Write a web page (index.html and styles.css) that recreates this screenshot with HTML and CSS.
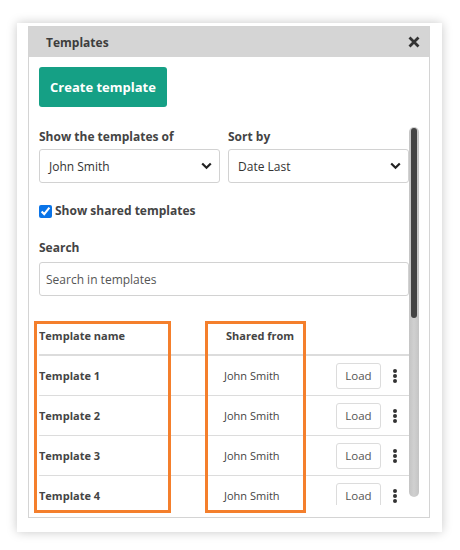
FILE: index.html
```html
<!DOCTYPE html>
<html>
<head>
<meta charset="utf-8">
<link rel="stylesheet" href="styles.css">
</head>
<body>
<div class="stage">
  <div class="card">
    <div class="panel">
      <div class="head">
        <span class="title">Templates</span>
        <svg class="close" width="12" height="12" viewBox="0 0 12 12"><path d="M1.5 1.5 L10.5 10.5 M10.5 1.5 L1.5 10.5" stroke="#333" stroke-width="2.8" stroke-linecap="butt"/></svg>
      </div>
      <div class="body">
        <button class="create">Create template</button>
        <div class="scrollwrap">
          <div class="scroll">
            <div class="filters">
              <div class="field">
                <div class="label">Show the templates of</div>
                <div class="select"><span>John Smith</span><svg width="11" height="8" viewBox="0 0 11 8"><path d="M1.2 1.5 L5.5 5.8 L9.8 1.5" fill="none" stroke="#222" stroke-width="2.2"/></svg></div>
              </div>
              <div class="field">
                <div class="label">Sort by</div>
                <div class="select"><span>Date Last</span><svg width="11" height="8" viewBox="0 0 11 8"><path d="M1.2 1.5 L5.5 5.8 L9.8 1.5" fill="none" stroke="#222" stroke-width="2.2"/></svg></div>
              </div>
            </div>
            <label class="check"><input type="checkbox" checked><span>Show shared templates</span></label>
            <div class="label search-label">Search</div>
            <div class="input">Search in templates</div>
            <div class="table">
              <div class="thead">
                <div class="c-name">Template name</div>
                <div class="c-shared th-shared">Shared from</div>
              </div>
              <div class="row">
                <div class="c-name name">Template 1</div>
                <div class="c-shared">John Smith</div>
                <div class="c-load"><span class="load">Load</span></div>
                <div class="c-menu"><span class="kebab"><i></i><i></i><i></i></span></div>
              </div>
              <div class="row">
                <div class="c-name name">Template 2</div>
                <div class="c-shared">John Smith</div>
                <div class="c-load"><span class="load">Load</span></div>
                <div class="c-menu"><span class="kebab"><i></i><i></i><i></i></span></div>
              </div>
              <div class="row">
                <div class="c-name name">Template 3</div>
                <div class="c-shared">John Smith</div>
                <div class="c-load"><span class="load">Load</span></div>
                <div class="c-menu"><span class="kebab"><i></i><i></i><i></i></span></div>
              </div>
              <div class="row">
                <div class="c-name name">Template 4</div>
                <div class="c-shared">John Smith</div>
                <div class="c-load"><span class="load">Load</span></div>
                <div class="c-menu"><span class="kebab"><i></i><i></i><i></i></span></div>
              </div>
            </div>
          </div>
          <div class="scrollbar"><div class="thumb"></div></div>
        </div>
      </div>
    </div>
  </div>
  <div class="mark m1"></div>
  <div class="mark m2"></div>
</div>
</body>
</html>
```
FILE: styles.css
```css
* { box-sizing: border-box; }
html, body { margin: 0; background: #fff; }
body { font-family: "Open Sans", "Liberation Sans", sans-serif; color: #444; }

.stage { position: relative; width: 460px; height: 550px; padding: 23px 0 0 17px; }

.card {
  width: 425px; height: 509px;
  padding: 3px 12px 14px 11px;
  background: #fff;
  box-shadow: 0 0 10px rgba(0,0,0,0.22);
}

.panel {
  width: 402px; height: 492px;
  border: 1px solid #d4d4d4;
  display: flex; flex-direction: column;
}

.head {
  height: 30px; flex: none;
  background: #d5d5d5;
  display: flex; align-items: center; justify-content: space-between;
  padding: 0 9px 0 17px;
}
.title { font-weight: 700; font-size: 12px; color: #3d3d3d; }
.close { display: block; }

.body { flex: 1; padding: 10px 10px 12px 10px; display: flex; flex-direction: column; }

.create {
  align-self: flex-start;
  width: 128px; height: 40px;
  border: none; border-radius: 3px;
  background: #15a085; color: #fff;
  font-family: inherit; font-weight: 700; font-size: 13px;
  padding: 0;
}

.scrollwrap { margin-top: 10px; height: 388px; display: flex; }
.scroll { flex: 1; overflow: hidden; padding-top: 11px; }

.scrollbar {
  width: 10px; margin: 10px 0 8px 0;
  background: linear-gradient(to right, #c4c4c4, #d0d0d0 50%, #c4c4c4);
  border-radius: 5px;
  padding: 1px 2px 0 2px;
}
.thumb { height: 190px; background: #444; border-radius: 3px; }

.filters { display: grid; grid-template-columns: 181px 181px; column-gap: 8px; }
.label { font-weight: 700; font-size: 12px; line-height: 18px; color: #444; }
.field .label { margin-bottom: 3px; }

.select {
  height: 34px; border: 1px solid #d2d2d2; border-radius: 3px;
  display: flex; align-items: center; justify-content: space-between;
  padding: 0 7px 0 9px;
  font-size: 12px; color: #333;
}
.select svg { display: block; }

.check {
  display: flex; align-items: center; margin-top: 19px;
  font-weight: 700; font-size: 12px; line-height: 18px; color: #444;
}
.check input { margin: 0 3px 0 0; width: 13px; height: 13px; accent-color: #0a74e8; }

.search-label { margin-top: 19px; }
.input {
  margin-top: 5px; height: 34px;
  border: 1px solid #d2d2d2; border-radius: 3px;
  display: flex; align-items: center; padding: 0 6px;
  font-size: 12px; color: #555;
}

.table { margin-top: 20px; }
.thead {
  height: 40px; display: flex; align-items: center;
  padding-top: 1px;
  border-bottom: 2px solid #dcdcdc;
  font-weight: 700; font-size: 11px; color: #444;
}
.row {
  height: 40px; display: flex; align-items: center;
  border-bottom: 1px solid #dcdcdc;
  font-size: 11px; color: #444;
}
.c-name { width: 185px; }
.c-shared { width: 112px; }
.th-shared { padding-left: 2px; }
.name { font-weight: 700; }
.c-load { width: 45px; }
.load {
  display: flex; align-items: center; justify-content: center;
  width: 45px; height: 26px;
  border: 1px solid #dcdcdc; border-radius: 3px;
  font-size: 11.5px; color: #555;
}
.c-menu { flex: 1; display: flex; justify-content: center; }
.kebab { display: flex; flex-direction: column; gap: 1px; }
.kebab i { display: block; width: 4px; height: 4px; border-radius: 50%; background: #333; }

.mark { position: absolute; top: 321px; height: 192px; border: 3px solid #f47f2c; }
.m1 { left: 34px; width: 137px; }
.m2 { left: 205px; width: 101px; }
```
